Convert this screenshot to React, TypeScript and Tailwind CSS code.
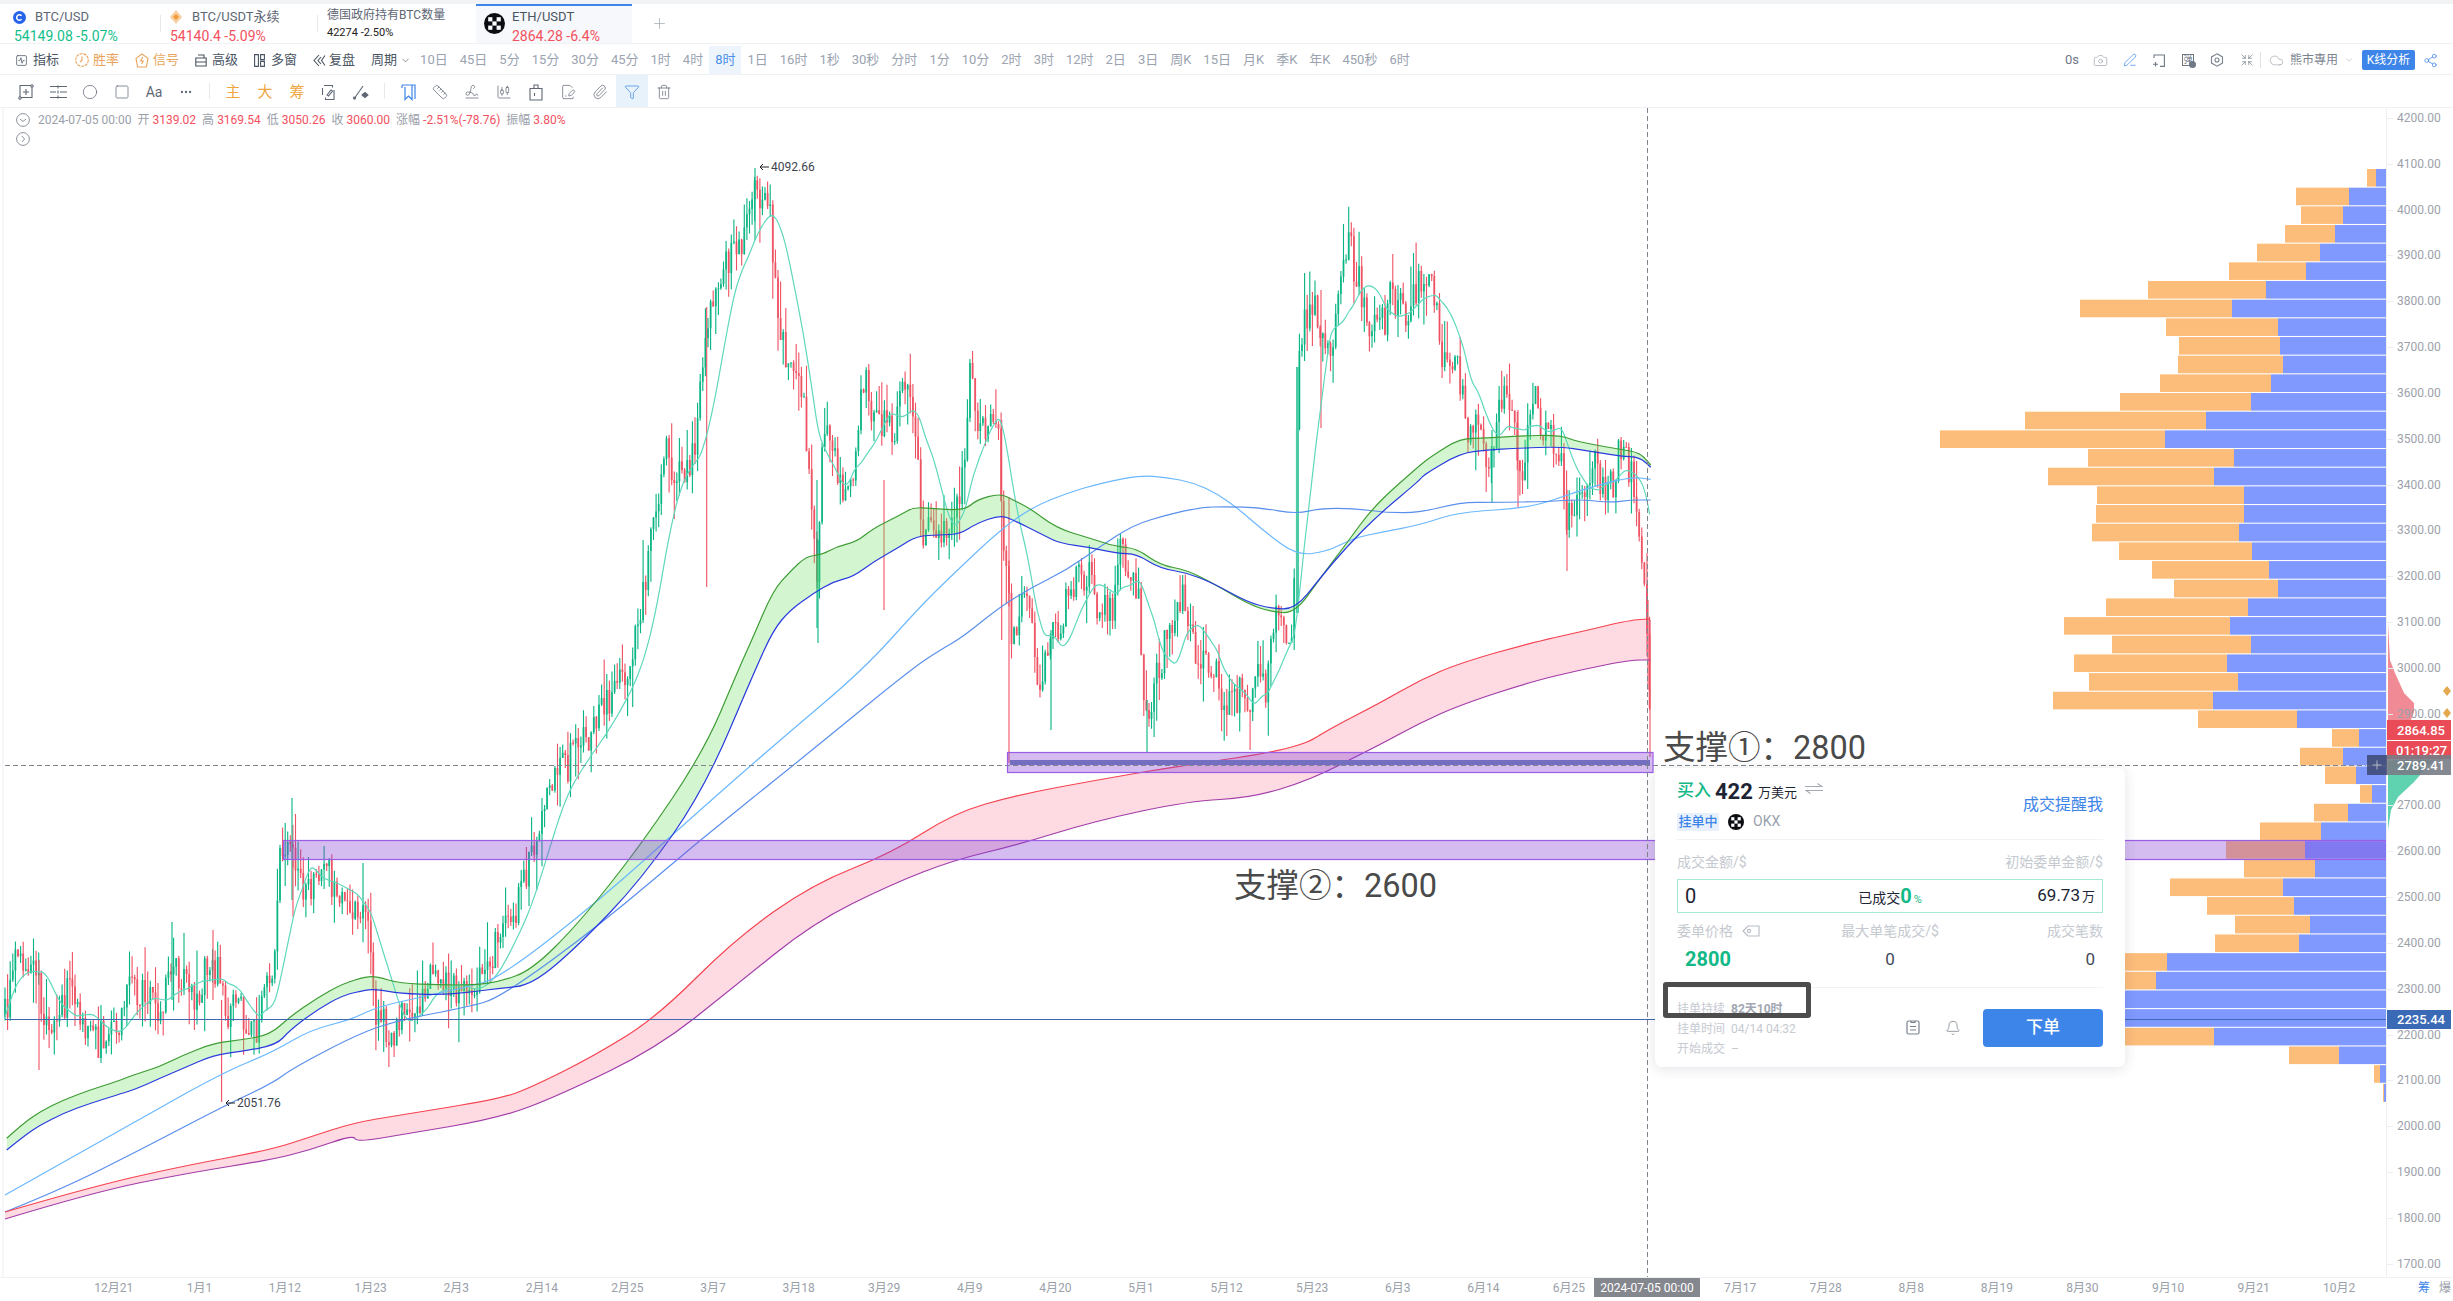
import {
  Bell,
  Camera,
  ChartCandlestick,
  ChevronDown,
  Circle,
  Cloud,
  Ellipsis,
  FilePenLine,
  Funnel,
  PenLine,
  Paperclip,
  Plus,
  Ruler,
  Share2,
  Shrink,
  Signature,
  Square,
  SquareActivity,
  Trash2,
} from "lucide-react";

type Pt = [number, number];

// points traced off 3x crops of the chart
const crop = (ox: number, oy: number, pts: Pt[]): Pt[] =>
  pts.map(([x, y]) => [ox + x / 3, oy + y / 3]);

const PRICE: Pt[] = [
  ...crop(0, 750, [[15,800],[35,680],[50,620],[75,620],[100,650],[118,700],[130,820],[165,860],[180,800],[205,720],[225,780],[260,830],[290,880],[320,830],[350,840],[385,720],[420,730],[450,745],[475,810],[500,720],[520,630],[550,700],[590,740],[630,620],[665,700],[680,820],[700,770],[740,800],[775,830],[790,680],[810,720],[825,600],[835,330],[850,290],[875,290],[890,370],[930,420],[960,420],[980,340],[1000,400],[1030,470],[1075,490],[1100,500],[1115,640],[1130,820],[1160,830],[1190,850],[1205,780],[1250,760],[1280,720],[1300,660],[1330,720],[1370,715],[1420,720],[1450,680],[1470,620],[1500,560]]),
  [520,900],[540,815],[563,770],[590,735],[615,690],
  ...crop(480, 150, [[450,1530],[480,1400],[500,1280],[530,1060],[550,900],[590,960],[620,980],[650,850],[670,600],[700,440],[735,340],[770,290],[800,250],[820,120],[850,150],[870,190],[885,360],[905,560],[930,640],[950,700],[975,780],[995,1100],[1010,1280],[1030,850],[1060,900],[1090,1050],[1120,1000],[1140,760],[1155,700],[1190,830],[1220,800],[1240,870],[1270,700],[1290,700],[1310,900],[1330,1180],[1360,1120],[1390,1130],[1420,1100],[1450,960],[1470,620],[1490,820],[1520,840],[1560,850]]),
  ...crop(900, 330, [[305,600],[320,660],[335,950],[355,880],[370,720],[390,880],[415,1050],[430,1030],[450,920],[475,930],[500,780],[530,760],[570,710],[590,820],[630,840],[650,800],[660,590],[685,720],[715,780],[730,1100],[745,1180],[760,1050],[785,1020],[800,880],[830,850],[855,800],[870,920],[900,1010],[930,1020],[950,1000],[965,1130],[1000,1120],[1020,1090],[1050,1160],[1065,1100],[1080,980],[1100,1090],[1115,870],[1130,880],[1165,890],[1180,870]]),
  ...crop(1220, 200, [[233,500],[245,400],[260,340],[285,300],[300,440],[320,450],[340,390],[365,270],[385,100],[400,200],[420,250],[445,380],[470,390],[490,370],[510,300],[540,320],[565,340],[580,290],[605,230],[630,260],[650,330],[655,460],[680,460],[710,500],[730,590],[745,780],[765,600],[790,780],[815,740],[835,640],[860,590],[875,650],[890,740],[900,800]]),
  ...crop(1380, 380, [[430,260],[445,120],[470,60],[490,150],[520,170],[545,250],[560,430],[575,370],[600,340],[625,320],[635,240],[650,260],[670,330],[700,310],[718,200],[735,220],[760,320],[775,430],[790,550],[800,700],[808,900],[812,1050]]),
];

const GREEN_TOP: Pt[] = [
  ...crop(0, 750, [[20,1165],[70,1120],[120,1085],[190,1050],[270,1020],[350,995],[400,975],[480,950],[550,915],[640,880],[720,870],[810,855],[870,800],[950,745],[1030,700],[1100,680],[1130,680],[1200,700],[1320,705],[1420,705],[1500,695]]),
  [532,970],[579,923],[641,845],[704,751],
  ...crop(480, 150, [[775,1560],[820,1460],[880,1320],[930,1265],[980,1218],[1025,1215],[1070,1190],[1130,1175],[1180,1135],[1260,1095],[1300,1072],[1350,1075],[1420,1080],[1460,1075],[1490,1050],[1560,1030]]),
  ...crop(900, 330, [[340,510],[390,535],[470,595],[570,625],[650,650],[710,655],[780,705],[860,720],[940,760],[1040,820],[1110,845],[1185,850],[1260,745],[1340,640],[1420,530],[1560,405]]),
  ...crop(1220, 200, [[640,765],[720,715],[800,715],[890,708]]),
  ...crop(1380, 380, [[540,165],[590,185],[720,208],[780,218],[812,255]]),
];

const BLUE_BOTTOM: Pt[] = [
  ...crop(0, 750, [[20,1200],[70,1160],[120,1125],[190,1090],[270,1060],[350,1035],[400,1020],[480,985],[550,955],[640,915],[720,905],[830,885],[870,840],[950,780],[1030,735],[1100,720],[1130,718],[1200,730],[1320,735],[1420,725],[1500,715]]),
  [532,985],[579,945],[641,880],[704,790],
  ...crop(480, 150, [[825,1560],[880,1440],[930,1380],[1000,1330],[1060,1295],[1120,1280],[1180,1235],[1260,1190],[1310,1158],[1380,1155],[1440,1152],[1490,1120],[1560,1095]]),
  ...crop(900, 330, [[340,570],[430,615],[480,640],[570,652],[650,670],[710,672],[780,715],[860,728],[940,760],[1040,815],[1110,835],[1185,838],[1260,745],[1340,650],[1440,550],[1560,450]]),
  ...crop(1220, 200, [[610,825],[720,760],[800,750],[890,745]]),
  ...crop(1380, 380, [[540,200],[620,212],[720,228],[780,232],[812,262]]),
];

const LIGHT_MA: Pt[] = [
  [5,1195],[85,1150],[133,1123],[222,1073],[273,1052],[310,1030],[350,1020],[377,1007],[417,998],[467,987],[500,978],
  [600,900],[700,810],[780,740],[863,670],[917,610],[947,580],
  ...crop(900, 330, [[300,600],[400,530],[500,490],[600,460],[720,436],[800,442],[880,458],[950,490],[1020,540],[1100,610],[1190,676],[1280,665],[1360,625],[1450,605],[1560,585]]),
  ...crop(1380, 380, [[240,395],[450,385],[600,330],[750,290],[812,298]]),
];

const MID_MA: Pt[] = [
  [5,1212],[60,1190],[140,1150],[222,1107],[273,1083],[293,1068],[360,1033],[400,1020],[467,1007],[500,998],
  [600,925],[700,840],[800,760],[910,670],[940,650],[963,637],
  ...crop(900, 330, [[300,830],[400,770],[500,720],[600,650],[700,585],[800,555],[900,532],[980,530],[1080,533],[1190,552],[1260,535],[1360,535],[1460,548],[1560,548]]),
  ...crop(1380, 380, [[240,367],[340,367],[500,365],[600,358],[690,368],[750,360],[812,360]]),
];

const RED_TOP: Pt[] = [
  [5,1212],[94,1186],[188,1165],[270,1150],[310,1137],[353,1123],[400,1115],[500,1099],[532,1087],[594,1056],[657,1017],[735,939],[813,884],[892,853],[954,813],[1017,795],[1097,780],[1173,767],[1297,749],[1333,727],[1380,703],[1420,680],[1460,663],[1530,643],[1580,632],[1630,620],[1650,619],
];

const PURPLE_BOTTOM: Pt[] = [
  [5,1219],[94,1192],[188,1173],[270,1160],[310,1150],[353,1135],[357,1142],[400,1135],[500,1118],[560,1095],[657,1048],[735,986],[813,923],[892,884],[954,860],[1017,845],[1095,821],[1189,801],[1251,798],[1310,780],[1363,753],[1383,743],[1420,723],[1460,705],[1530,682],[1580,670],[1630,660],[1650,660],
];

// orange start, blue start of each row of the volume profile
const PROFILE: Pt[] = [
  [2367,2376],[2296,2349],[2301,2343],[2285,2335],[2257,2320],[2229,2306],[2148,2266],[2080,2232],[2166,2278],[2179,2280],[2178,2283],[2160,2271],[2120,2251],[2025,2206],[1940,2165],[2088,2234],[2048,2214],[2097,2244],[2096,2244],[2092,2239],[2119,2252],[2152,2269],[2174,2278],[2106,2248],[2064,2230],[2112,2251],[2074,2227],[2089,2238],[2053,2213],[2198,2297],[2332,2359],[2300,2343],[2325,2356],[2360,2372],[2314,2348],[2260,2321],[2226,2305],[2244,2315],[2170,2283],[2207,2294],[2235,2310],[2215,2299],[2120,2167],[2110,2156],[2100,2100],[2100,2100],[2080,2214],[2289,2339],[2374,2380],[2383,2384],
];

const WICKS: [number, number, number, string][] = [
  [221.6, 1000, 1102, "r"], [706.7, 307, 587, "r"], [1009, 497, 763, "r"], [1147, 700, 752, "g"],
  [1051, 630, 730, "g"], [1001.7, 420, 640, "r"], [1321, 290, 428, "r"], [1567, 490, 571, "r"],
  [1492, 430, 503, "g"], [1518, 410, 507, "r"], [39, 960, 1070, "r"], [292, 798, 900, "g"],
  [293, 860, 917, "r"], [172, 922, 1000, "g"], [213, 930, 1000, "r"], [755, 168, 240, "g"],
  [1650, 620, 757, "r"], [1648, 600, 690, "r"], [817, 480, 628, "g"], [884, 480, 610, "r"],
  [818, 540, 643, "g"],
];

function seeded(seed: number) {
  return () => {
    seed = (seed + 0x6d2b79f5) | 0;
    let t = Math.imul(seed ^ (seed >>> 15), 1 | seed);
    t = (t + Math.imul(t ^ (t >>> 7), 61 | t)) ^ t;
    return ((t ^ (t >>> 14)) >>> 0) / 4294967296;
  };
}

function guideAt(x: number) {
  for (let i = 1; i < PRICE.length; i++) {
    if (x <= PRICE[i][0]) {
      const [x0, y0] = PRICE[i - 1];
      const [x1, y1] = PRICE[i];
      return y0 + ((y1 - y0) * (x - x0)) / Math.max(x1 - x0, 0.01);
    }
  }
  return PRICE[PRICE.length - 1][1];
}

function buildCandles() {
  const rnd = seeded(20240705);
  const out = { gw: "", rw: "", gb: "", rb: "", ma: [] as Pt[] };
  const closes: number[] = [];
  let prev = guideAt(5);
  for (let x = 5; x < 1651; x += 2.594) {
    const base = guideAt(x);
    const close = base + (rnd() - 0.5) * 36;
    const top = Math.min(prev, close) - rnd() * rnd() * 44;
    const bottom = Math.max(prev, close) + rnd() * rnd() * 44;
    const up = close < prev;
    const h = Math.max(Math.abs(close - prev), 1);
    const wick = `M${x.toFixed(1)} ${top.toFixed(1)}V${bottom.toFixed(1)}`;
    const body = `M${(x - 0.9).toFixed(1)} ${Math.min(prev, close).toFixed(1)}h1.8v${h.toFixed(1)}h-1.8z`;
    if (up) {
      out.gw += wick;
      out.gb += body;
    } else {
      out.rw += wick;
      out.rb += body;
    }
    closes.push(base);
    const win = closes.slice(-14);
    out.ma.push([x, win.reduce((a, b) => a + b, 0) / win.length]);
    prev = close;
  }
  return out;
}

const candles = buildCandles();

function line(pts: Pt[]) {
  let d = `M${pts[0][0].toFixed(1)} ${pts[0][1].toFixed(1)}`;
  for (let i = 1; i < pts.length - 1; i++) {
    const [x, y] = pts[i];
    const mx = (x + pts[i + 1][0]) / 2;
    const my = (y + pts[i + 1][1]) / 2;
    d += `Q${x.toFixed(1)} ${y.toFixed(1)} ${mx.toFixed(1)} ${my.toFixed(1)}`;
  }
  const end = pts[pts.length - 1];
  return `${d}L${end[0].toFixed(1)} ${end[1].toFixed(1)}`;
}

const band = (a: Pt[], b: Pt[]) => `${line(a)}${line([...b].reverse()).replace("M", "L")}Z`;

const PERIODS_A = ["10日", "45日", "5分", "15分", "30分", "45分", "1时", "4时", "8时", "1日", "16时", "1秒", "30秒", "分时", "1分", "10分", "2时", "3时", "12时", "2日", "3日", "周K", "15日", "月K", "季K", "年K", "450秒", "6时"];

const DATES = ["12月21", "1月1", "1月12", "1月23", "2月3", "2月14", "2月25", "3月7", "3月18", "3月29", "4月9", "4月20", "5月1", "5月12", "5月23", "6月3", "6月14", "6月25", "7月6", "7月17", "7月28", "8月8", "8月19", "8月30", "9月10", "9月21", "10月2"];

const PRICES = Array.from({ length: 26 }, (_, i) => `${4200 - i * 100}.00`);

function OkxLogo({ size }: { size: number }) {
  return (
    <svg width={size} height={size} viewBox="0 0 20 20" className="shrink-0">
      <circle cx="10" cy="10" r="10" fill="#0b0d12" />
      <rect x="4" y="4" width="4" height="4" fill="#fff" />
      <rect x="12" y="4" width="4" height="4" fill="#fff" />
      <rect x="8" y="8" width="4" height="4" fill="#fff" />
      <rect x="4" y="12" width="4" height="4" fill="#fff" />
      <rect x="12" y="12" width="4" height="4" fill="#fff" />
    </svg>
  );
}

function Tabs() {
  return (
    <div className="flex h-[40px] items-stretch border-b border-[#f0f1f3]">
      <div className="w-[160px] pl-[13px] pt-[3px]">
        <div className="flex h-[20px] items-center gap-[9px] text-[13px] text-[#5d6675]">
          <svg width="13" height="13" viewBox="0 0 14 14">
            <circle cx="7" cy="7" r="7" fill="#2563eb" />
            <path d="M9.2 5a3 3 0 1 0 0 4" fill="none" stroke="#fff" strokeWidth="1.6" />
          </svg>
          BTC/USD
        </div>
        <div className="pl-px text-[14px] leading-[18px] text-[#13c08c]">54149.08 -5.07%</div>
      </div>
      <div className="my-auto h-[17px] w-px bg-[#e6e8eb]" />
      <div className="w-[156px] pl-[9px] pt-[3px]">
        <div className="flex h-[20px] items-center gap-[10px] text-[13px] text-[#5d6675]">
          <svg width="12" height="14" viewBox="0 0 12 14">
            <path d="M6 0l6 7-6 7-6-7z" fill="#f7cfa0" />
            <path d="M6 4l3 3-3 3-3-3z" fill="#ef9a3c" />
          </svg>
          BTC/USDT永续
        </div>
        <div className="text-[14px] leading-[18px] text-[#f4515e]">54140.4 -5.09%</div>
      </div>
      <div className="my-auto h-[17px] w-px bg-[#e6e8eb]" />
      <div className="w-[158px] pl-[9px] pt-px">
        <div className="h-[20px] text-[12px] leading-[20px] text-[#5d6675]">德国政府持有BTC数量</div>
        <div className="text-[11px] leading-[16px] text-[#222]">42274 -2.50%</div>
      </div>
      <div className="flex w-[156px] gap-[7px] border-t-2 border-[#3d85e8] bg-[#f6f8fb] pl-[8px]">
        <div className="pt-[7px]">
          <OkxLogo size={21} />
        </div>
        <div className="pt-px">
          <div className="h-[20px] text-[13px] leading-[20px] text-[#4a5563]">ETH/USDT</div>
          <div className="text-[14px] leading-[18px] text-[#f4515e]">2864.28 -6.4%</div>
        </div>
      </div>
      <div className="flex w-[54px] items-center justify-center text-[#aeb4bd]">
        <Plus size={17} strokeWidth={1.2} />
      </div>
    </div>
  );
}

function ToolItem({ icon, label, cls, gap }: { icon: React.ReactNode; label: string; cls: string; gap: string }) {
  return (
    <div className={`flex items-center ${gap} ${cls}`}>
      {icon}
      <span>{label}</span>
    </div>
  );
}

function TopToolbar() {
  return (
    <div className="flex h-[31px] items-center border-b border-[#f0f1f3] pt-[2px] text-[13px]">
      <div className="flex items-center gap-[16px] pl-[15px] text-[#4a5563]">
        <ToolItem
          gap="gap-[5px]"
          cls=""
          label="指标"
          icon={<SquareActivity size={13} strokeWidth={1.4} />}
        />
        <ToolItem
          gap="gap-[4px]"
          cls="text-[#e8a45c]"
          label="胜率"
          icon={
            <svg width="14" height="14" viewBox="0 0 14 14" fill="none" stroke="#e8a45c" strokeWidth="1.1">
              <circle cx="7" cy="7" r="6.3" strokeDasharray="3 .8" />
              <path d="M7 3.6V7.4L5 9" />
            </svg>
          }
        />
        <ToolItem
          gap="gap-[4px]"
          cls="text-[#e8a45c]"
          label="信号"
          icon={
            <svg width="14" height="15" viewBox="0 0 14 15" fill="none" stroke="#e8a45c" strokeWidth="1.1">
              <path d="M7 1l6 4.4-1.6 8.6H2.6L1 5.4z" />
              <path d="M7.8 4L5.6 8h2.6l-1.4 3" />
            </svg>
          }
        />
        <ToolItem
          gap="gap-[5px]"
          cls=""
          label="高级"
          icon={
            <svg width="12" height="13" viewBox="0 0 12 13" fill="none" stroke="#4a5563" strokeWidth="1.1">
              <path d="M3 1h6v3M.8 4h10.4v8H.8zM.8 8h10.4" />
            </svg>
          }
        />
        <ToolItem
          gap="gap-[6px]"
          cls=""
          label="多窗"
          icon={
            <svg width="11" height="13" viewBox="0 0 11 13" fill="none" stroke="#4a5563" strokeWidth="1.1">
              <path d="M.6.6h3.8v11.8H.6zM6.6.6h3.8v5H6.6zM6.6 7.4h3.8v5H6.6z" />
            </svg>
          }
        />
        <ToolItem
          gap="gap-[3px]"
          cls=""
          label="复盘"
          icon={
            <svg width="13" height="13" viewBox="0 0 13 13" fill="none" stroke="#4a5563" strokeWidth="1.1">
              <path d="M6 1L1 6.5 6 12M8 3L5 6.5 8 10M12 1.5L8.5 6.5 12 11.5" />
            </svg>
          }
        />
        <div className="flex items-center gap-[3px]">
          周期
          <ChevronDown size={11} strokeWidth={1.4} />
        </div>
      </div>
      <div className="ml-[3px] flex h-full items-stretch text-[#9aa3af]">
        {PERIODS_A.map((p) =>
          p === "8时" ? (
            <span key={p} className="flex items-center bg-[#edf4fc] px-[6px] text-[#4b8fe8]">
              {p}
            </span>
          ) : (
            <span key={p} className="flex items-center px-[6px]">
              {p}
            </span>
          ),
        )}
      </div>
      <div className="ml-auto flex items-center text-[#9aa0a9]">
        <span className="w-[14px] text-[#6f7885]">0s</span>
        <Camera className="ml-[14px]" size={15} strokeWidth={1.1} />
        <PenLine className="ml-[15px] text-[#3d85e8]" size={14} strokeWidth={1.2} />
        <svg className="ml-[15px]" width="13" height="13" viewBox="0 0 13 13" fill="none" stroke="#6f7885" strokeWidth="1.1">
          <path d="M2 4V1h10.4v11.4H8M3.5 8v4.5M1 10.2h5" />
        </svg>
        <div className="relative ml-[17px] flex h-[12px] w-[12px] items-center justify-center border border-[#6f7885] text-[9px] leading-none text-[#6f7885]">
          弹
          <span className="absolute -bottom-[3px] -right-[3px] h-[7px] w-[7px] rounded-full bg-[#6f7885]" />
        </div>
        <svg className="ml-[16px]" width="14" height="14" viewBox="0 0 14 14" fill="none" stroke="#7b838f" strokeWidth="1.1">
          <path d="M7 .8l5.5 3.1v6.2L7 13.2 1.5 10.1V3.9z" />
          <circle cx="7" cy="7" r="2" />
        </svg>
        <Shrink className="ml-[16px] text-[#6f7885]" size={14} strokeWidth={1.1} />
        <div className="ml-[6px] h-[16px] w-px bg-[#dfe2e6]" />
        <Cloud className="ml-[8px]" size={15} strokeWidth={1} />
        <span className="ml-[6px] text-[12px] text-[#7b838f]">熊市專用</span>
        <ChevronDown className="ml-[6px]" size={10} strokeWidth={1.2} />
        <span className="ml-[8px] flex h-[20px] w-[53px] items-center justify-center rounded-[2px] bg-[#3d85e8] text-[12px] text-white">
          K线分析
        </span>
        <Share2 className="ml-[8px] mr-[15px] text-[#3d85e8]" size={15} strokeWidth={1.2} />
      </div>
    </div>
  );
}

function Cell({ children, active }: { children: React.ReactNode; active?: boolean }) {
  return (
    <div className={`flex h-full w-[32px] items-center justify-center pt-[2px] ${active ? "bg-[#e8f2fb]" : ""}`}>
      {children}
    </div>
  );
}

function DrawToolbar() {
  const ic = { size: 16, strokeWidth: 1.1, color: "#5f6775" };
  return (
    <div className="flex h-[33px] items-stretch border-b border-[#f0f1f3] pl-[10px]">
      <Cell>
        <svg width="16" height="16" viewBox="0 0 16 16" fill="none" stroke="#5f6775" strokeWidth="1.1">
          <path d="M2 1.5h12v12H2zM8 5v6M5 8h6" />
          <circle cx="2" cy="14" r="1.2" fill="#fff" />
          <circle cx="14" cy="2" r="1.2" fill="#fff" />
        </svg>
      </Cell>
      <Cell>
        <svg width="17" height="14" viewBox="0 0 17 14" fill="none" stroke="#5f6775" strokeWidth="1.1">
          <path d="M0 1.5h17M0 7h6M10 7h7M0 12.5h17M8 .5v3M8 5.5v3M8 10.5v3" />
        </svg>
      </Cell>
      <Cell>
        <Circle {...ic} />
      </Cell>
      <Cell>
        <Square {...ic} />
      </Cell>
      <Cell>
        <span className="text-[14px] text-[#5f6775]">Aa</span>
      </Cell>
      <Cell>
        <Ellipsis size={14} strokeWidth={2} color="#5f6775" />
      </Cell>
      <div className="mx-[7px] my-auto h-[16px] w-px bg-[#e6e8eb]" />
      {["主", "大", "筹"].map((t) => (
        <Cell key={t}>
          <span className="text-[15px] text-[#f0a640]">{t}</span>
        </Cell>
      ))}
      <Cell>
        <svg width="16" height="17" viewBox="0 0 16 17" fill="none" stroke="#5f6775" strokeWidth="1.1">
          <path d="M3 1.5h8.5v2M13 6v9.5H4.5v-2M1.5 4v7M6 11l4-5 1.5 1-4 5z" />
        </svg>
      </Cell>
      <Cell>
        <svg width="17" height="16" viewBox="0 0 17 16" fill="none" stroke="#5f6775" strokeWidth="1.1">
          <path d="M1 15L10 2" />
          <circle cx="1.5" cy="14" r="1" />
          <path d="M9 11l3-2.5 3 2.5-3 2.5z" fill="#5f6775" />
        </svg>
      </Cell>
      <div className="mx-[7px] my-auto h-[16px] w-px bg-[#e6e8eb]" />
      <Cell>
        <svg width="15" height="17" viewBox="0 0 15 17" fill="none" stroke="#3d85e8" strokeWidth="1.2">
          <path d="M1 1h10v14.5L7.5 12 4 15.5V3M1 1v3M11 1h3v14" />
        </svg>
      </Cell>
      <Cell>
        <Ruler {...ic} />
      </Cell>
      <Cell>
        <Signature {...ic} />
      </Cell>
      <Cell>
        <ChartCandlestick {...ic} />
      </Cell>
      <Cell>
        <svg width="14" height="17" viewBox="0 0 14 17" fill="none" stroke="#5f6775" strokeWidth="1.1">
          <path d="M1 4.5h12V16H1zM5 4.5V1h4v3.5M5.5 9v3" />
        </svg>
      </Cell>
      <Cell>
        <FilePenLine {...ic} />
      </Cell>
      <Cell>
        <Paperclip {...ic} />
      </Cell>
      <Cell active>
        <Funnel size={16} strokeWidth={1.1} color="#3d85e8" />
      </Cell>
      <Cell>
        <Trash2 {...ic} />
      </Cell>
    </div>
  );
}

function Chart() {
  return (
    <svg width="2386" height="1169" viewBox="0 108 2386 1169" className="absolute left-0 top-0">
      <line x1="3" y1="108" x2="3" y2="1277" stroke="#eceef0" />
      {PROFILE.map(([o, b], i) => {
        const y = 169 + i * 18.67;
        const h = i === 49 ? 18 : 17.6;
        return (
          <g key={i}>
            <rect x={o} y={y} width={Math.max(b - o, 0)} height={h} fill="#fdbd7a" />
            <rect x={b} y={y} width={2386 - b} height={h} fill="#8099ff" />
          </g>
        );
      })}
      <path d={candles.gb} fill="#2dbf95" />
      <path d={candles.rb} fill="#ef6070" />
      <path d={candles.gw} stroke="#05b482" strokeWidth="1.1" fill="none" />
      <path d={candles.rw} stroke="#ee5161" strokeWidth="1.1" fill="none" />
      {WICKS.map(([x, a, b, c], i) => (
        <line key={i} x1={x} x2={x} y1={a} y2={b} stroke={c === "r" ? "#ee5161" : "#05b482"} strokeWidth="1.1" />
      ))}
      <rect x="1296" y="367" width="3" height="246" fill="#4ccba6" />
      <path d={band(GREEN_TOP, BLUE_BOTTOM)} fill="rgba(110,225,100,0.3)" />
      <path d={band(RED_TOP, PURPLE_BOTTOM)} fill="rgba(250,100,140,0.24)" />
      <path d={line(candles.ma)} stroke="#5fd8bc" strokeWidth="1.2" fill="none" />
      <path d={line(LIGHT_MA)} stroke="#6bb8ff" strokeWidth="1.2" fill="none" />
      <path d={line(MID_MA)} stroke="#5a8fec" strokeWidth="1.2" fill="none" />
      <path d={line(GREEN_TOP)} stroke="#3e9c35" strokeWidth="1.2" fill="none" />
      <path d={line(BLUE_BOTTOM)} stroke="#2a3be0" strokeWidth="1.2" fill="none" />
      <path d={line(RED_TOP)} stroke="#f5434f" strokeWidth="1.2" fill="none" />
      <path d={line(PURPLE_BOTTOM)} stroke="#a23ca8" strokeWidth="1.2" fill="none" />
      <line x1="5" x2="2386" y1="1019.5" y2="1019.5" stroke="#3f68b0" strokeWidth="1.1" />
      <rect x="1010" y="760" width="640" height="5" fill="#6a87b4" />
      <rect x="1007.5" y="752.5" width="645.5" height="20" fill="rgba(132,64,212,0.35)" stroke="#9b5de5" strokeWidth="1.2" />
      <rect x="283.5" y="840.5" width="2103" height="19" fill="rgba(132,64,212,0.35)" stroke="#9b5de5" strokeWidth="1.2" />
      <line x1="5" x2="2366" y1="765.5" y2="765.5" stroke="#7f858e" strokeDasharray="5 3" />
      <line x1="1647.5" x2="1647.5" y1="108" y2="1277" stroke="#7f858e" strokeDasharray="5 3" />
      <g fontSize="12" fill="#3c4350">
        <path d="M760 167h9M763 164l-3 3 3 3" stroke="#222" fill="none" />
        <text x="771" y="171">4092.66</text>
        <path d="M226 1103h9M229 1100l-3 3 3 3" stroke="#222" fill="none" />
        <text x="237" y="1107">2051.76</text>
      </g>
    </svg>
  );
}

function LabelRow({ children }: { children: React.ReactNode }) {
  return <div className="flex justify-between text-[14px] leading-[20px] text-[#c5c9d0]">{children}</div>;
}

function OrderCard() {
  return (
    <div className="absolute left-[1655px] top-[660px] h-[299px] w-[470px] rounded-[7px] bg-white px-[22px] shadow-[0_2px_14px_rgba(30,40,60,0.13)]">
      <div className="relative h-[72px] border-b border-[#f2f3f5] pt-[9px]">
        <div className="flex h-[28px] items-center text-[#1d2433]">
          <span className="text-[17px] font-medium text-[#12b886]">买入</span>
          <span className="ml-[4px] text-[22px] font-bold">422</span>
          <span className="ml-[5px] mt-[4px] text-[13px]">万美元</span>
          <svg className="mb-[6px] ml-[8px]" width="18" height="11" viewBox="0 0 18 11" fill="none" stroke="#a4aab4" strokeWidth="1.1">
            <path d="M0 3.5h17L12.5.5M18 7.5H1l4.5 3" />
          </svg>
        </div>
        <div className="mt-[6px] flex items-center">
          <span className="flex h-[18px] w-[42px] items-center justify-center bg-[#e8f1fb] text-[13px] font-medium text-[#3d85e8]">
            挂单中
          </span>
          <span className="ml-[9px]">
            <OkxLogo size={16} />
          </span>
          <span className="ml-[9px] text-[14px] text-[#9aa1ad]">OKX</span>
        </div>
        <span className="absolute right-0 top-[25px] text-[16px] leading-[24px] text-[#3d85e8]">成交提醒我</span>
      </div>
      <div className="pt-[12px]">
        <LabelRow>
          <span>成交金额/$</span>
          <span>初始委单金额/$</span>
        </LabelRow>
        <div className="mt-[7px] grid h-[34px] grid-cols-3 items-center border border-[#a8e8d2] px-[7px] text-[#1d2433]">
          <span className="text-[20px]">0</span>
          <span className="flex items-baseline justify-center text-[14px]">
            已成交<b className="text-[20px] font-bold text-[#12b886]">0</b>
            <span className="ml-[2px] text-[11px] text-[#12b886]">%</span>
          </span>
          <span className="text-right text-[17px]">
            69.73<span className="ml-[2px] text-[13px]">万</span>
          </span>
        </div>
        <div className="mt-[8px] grid grid-cols-3 text-[14px] leading-[20px] text-[#c5c9d0]">
          <span className="flex items-center gap-[9px]">
            委单价格
            <svg width="18" height="12" viewBox="0 0 18 12" fill="none" stroke="#b6bbc4" strokeWidth="1.1">
              <path d="M6 1h11v10H6L1 6z" />
              <circle cx="7" cy="6" r="1.6" />
            </svg>
          </span>
          <span className="text-center">最大单笔成交/$</span>
          <span className="text-right">成交笔数</span>
        </div>
        <div className="mt-[5px] grid grid-cols-3 items-center leading-[26px] text-[#414a58]">
          <span className="pl-[8px] text-[20px] font-bold text-[#12b886]">2800</span>
          <span className="text-center text-[17px]">0</span>
          <span className="pr-[8px] text-right text-[17px]">0</span>
        </div>
      </div>
      <div className="mt-[15px] flex border-t border-[#f2f3f5] pt-[11px]">
        <div className="text-[12px] leading-[20px] text-[#c5c9d0]">
          <div className="flex gap-[6px]">
            挂单持续<span className="font-bold text-[#a1a7b2]">82天10时</span>
          </div>
          <div className="flex gap-[6px]">
            挂单时间<span>04/14 04:32</span>
          </div>
          <div className="flex gap-[6px]">
            开始成交<span>–</span>
          </div>
        </div>
        <div className="ml-auto mt-[10px] flex items-start">
          <svg className="mt-[11px] text-[#7b838f]" width="14" height="15" viewBox="0 0 14 15" fill="none" stroke="currentColor" strokeWidth="1.2">
            <rect x="1" y="1" width="12" height="13" rx="1.5" />
            <path d="M5 1v1.5h4V1M4 6.5h6M4 10h6" />
          </svg>
          <Bell className="ml-[25px] mt-[11px] text-[#7b838f]" size={16} strokeWidth={1.2} />
          <button className="ml-[22px] h-[38px] w-[120px] rounded-[4px] bg-[#3d85e8] text-[17px] font-medium text-white">
            下单
          </button>
        </div>
      </div>
    </div>
  );
}

function PriceAxis() {
  return (
    <div className="relative w-[67px] border-l border-[#eef0f2] text-[12px] text-[#9ca1aa]">
      <svg width="67" height="1169" viewBox="2386 108 67 1169" className="absolute left-0 top-0">
        <path d="M2387 623L2389 660 2394 673 2403 693 2413 703 2413 712 2410 720H2387Z" fill="#f08b96" />
        <path d="M2387 760H2432L2413 782 2397 797 2390 810 2387 830Z" fill="#5fd3b0" />
        <path d="M2446 686l4 5-4 5-4-5zM2446 708l4 5-4 5-4-5z" fill="#e4a84f" />
      </svg>
      <div className="relative">
        {PRICES.map((p) => (
          <div key={p} className="flex h-[45.83px] items-start pt-[2px] leading-[16px]">
            <span className="mr-[4px] mt-[8px] h-px w-[6px] bg-[#eceef0]" />
            {p}
          </div>
        ))}
      </div>
      <div className="absolute left-0 top-[612px] flex h-[20px] w-[64px] items-center bg-[#e94b57] pl-[10px] text-[13px] font-medium leading-none text-white">
        2864.85
      </div>
      <div className="absolute left-0 top-[633px] flex h-[18px] w-[64px] items-center bg-[#e94b57] pl-[9px] text-[13px] font-medium leading-none text-white">
        01:19:27
      </div>
      <div className="absolute left-0 top-[647px] flex h-[20px] w-[64px] items-center bg-[rgba(120,124,134,0.9)] pl-[10px] text-[13px] font-medium leading-none text-white">
        2789.41
      </div>
      <div className="absolute -left-[20px] top-[647px] flex h-[20px] w-[20px] items-center justify-center bg-[rgba(60,72,112,0.85)] text-[#c7ccd6]">
        <Plus size={14} strokeWidth={1.4} />
      </div>
      <div className="absolute left-0 top-[902px] flex h-[19px] w-[64px] items-center bg-[#3a6ab5] pl-[10px] text-[13px] font-medium leading-none text-white">
        2235.44
      </div>
    </div>
  );
}

function TimeAxis() {
  return (
    <div className="relative flex h-[20px] items-center border-t border-[#f0f1f3] pl-[71px] text-[12px] text-[#9aa0a9]">
      {DATES.map((d) => (
        <span key={d} className="w-[85.6px] shrink-0 text-center">
          {d}
        </span>
      ))}
      <span className="ml-[36px] text-[#3d85e8]">筹</span>
      <span className="ml-[9px]">爆</span>
      <span className="absolute left-[1594px] top-0 flex h-[19px] w-[106px] items-center justify-center bg-[#85878f] text-white">
        2024-07-05 00:00
      </span>
    </div>
  );
}

export default function App() {
  const quote: [string, string][] = [
    ["开", "3139.02"],
    ["高", "3169.54"],
    ["低", "3050.26"],
    ["收", "3060.00"],
    ["涨幅", "-2.51%(-78.76)"],
    ["振幅", "3.80%"],
  ];

  return (
    <div className="flex h-[1301px] w-[2453px] flex-col overflow-hidden bg-white [font-family:Roboto,'Noto_Sans_CJK_SC',sans-serif]">
      <div className="h-[4px] bg-[#f2f3f5]" />
      <Tabs />
      <TopToolbar />
      <DrawToolbar />
      <div className="flex h-[1169px]">
        <div className="relative w-[2386px]">
          <Chart />
          <div className="absolute left-[16px] top-[5px] flex flex-col gap-[5px]">
            <div className="flex h-[14px] items-center text-[12px] text-[#9aa0aa]">
              <svg width="14" height="14" viewBox="0 0 14 14" fill="none" stroke="#8a919c" strokeWidth="1">
                <circle cx="7" cy="7" r="6.4" />
                <path d="M4 6l3 2.5L10 6" />
              </svg>
              <span className="ml-[8px]">2024-07-05 00:00</span>
              {quote.map(([k, v]) => (
                <span key={k} className="ml-[6px]">
                  {k}
                  <span className="ml-[3px] text-[#f2505e]">{v}</span>
                </span>
              ))}
            </div>
            <svg width="14" height="14" viewBox="0 0 14 14" fill="none" stroke="#8a919c" strokeWidth="1">
              <circle cx="7" cy="7" r="6.4" />
              <path d="M6 4l2.5 3L6 10" />
            </svg>
          </div>
          <span className="absolute left-[1663px] top-[618px] text-[32.5px] leading-[44px] text-[#4a4a4a]">支撑①：2800</span>
          <span className="absolute left-[1234px] top-[756px] text-[32.5px] leading-[44px] text-[#4a4a4a]">支撑②：2600</span>
          <OrderCard />
          <div className="absolute left-[1663px] top-[874px] h-[36px] w-[148px] rounded-[3px] border-[5px] border-[#4d4d4d]" />
        </div>
        <PriceAxis />
      </div>
      <TimeAxis />
    </div>
  );
}
